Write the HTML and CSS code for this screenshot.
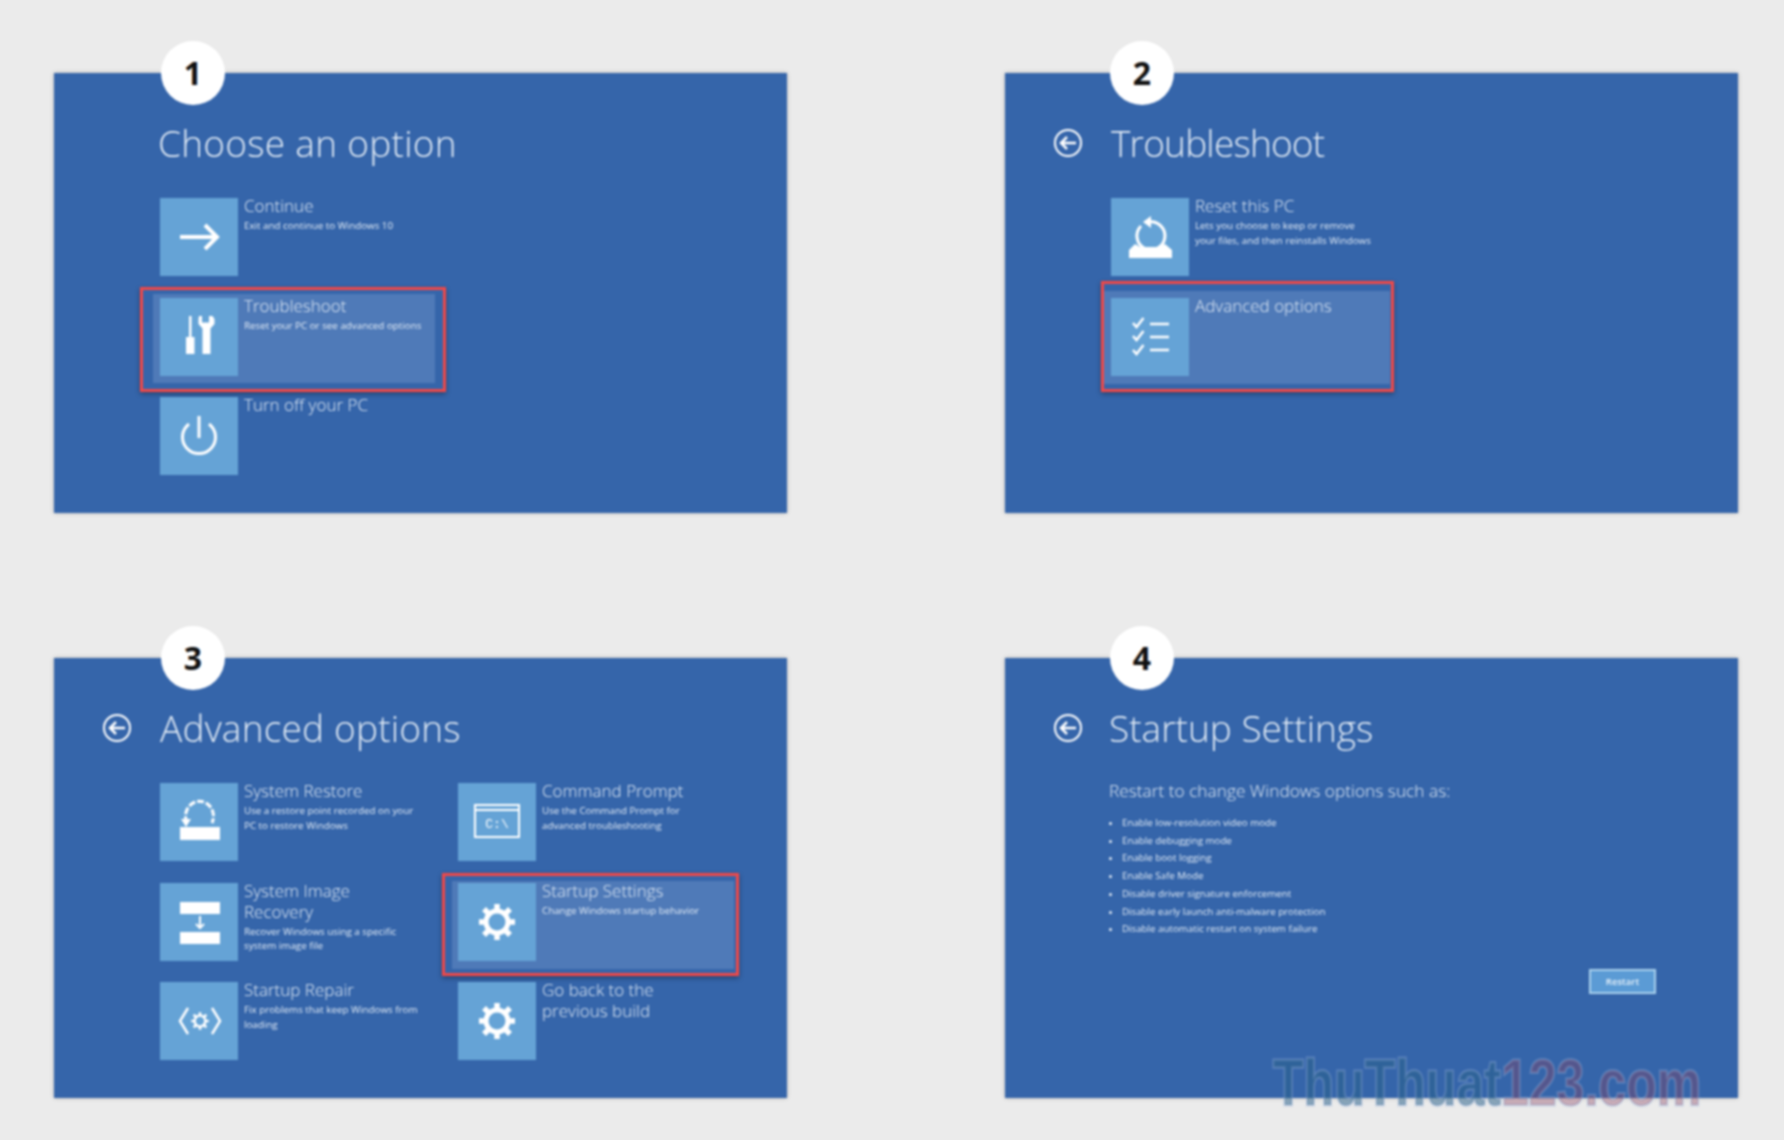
FILE: index.html
```html
<!DOCTYPE html>
<html lang="en">
<head>
  <meta charset="UTF-8" />
  <title>Startup Settings steps</title>
  <link rel="stylesheet" href="styles.css">
</head>
<body>
  <svg class="defs" width="0" height="0">
    <symbol id="gear" viewBox="0 0 78 78">
      <g class="line">
        <circle cx="39" cy="39" r="11" stroke-width="5" />
        <path d="M39 21v6M39 51v6M21 39h6M51 39h6M26 26l4.500 4.500M47.500 47.500l4.500 4.500M26 52l4.500-4.500M47.500 30.500l4.500-4.500" stroke-width="5.500" />
      </g>
    </symbol>
  </svg>

  <div class="sheet">
    <section class="panel">
      <div class="badge">1</div>
      <header class="head">
        <span class="back back-empty"></span>
        <h2 class="title-choose">Choose an option</h2>
      </header>
      <div class="options">
        <div class="option">
          <div class="tile">
            <svg viewBox="0 0 78 78"><path class="line" stroke-width="4" d="M20 39h36M45 27l12 12-12 12" /></svg>
          </div>
          <div class="text">
            <div class="name">Continue</div>
            <div class="desc">Exit and continue to Windows 10</div>
          </div>
        </div>
        <div class="option">
          <div class="glow glow-a"></div>
          <div class="tile">
            <svg viewBox="0 0 78 78">
              <path class="fill" d="M29 18h2.500v21H29zM26 39h8.500v17H26zM39 18l3 0v6.500h7V18h3.500l2 3v5l-4 4.500V56h-8V30.500l-4-4.500v-5z" />
            </svg>
          </div>
          <div class="text">
            <div class="name">Troubleshoot</div>
            <div class="desc">Reset your PC or see advanced options</div>
          </div>
          <div class="mark mark-a"></div>
        </div>
        <div class="option">
          <div class="tile">
            <svg viewBox="0 0 78 78"><path class="line" stroke-width="3" d="M39 19v22M29 27a16.500 16.500 0 1 0 20 0" /></svg>
          </div>
          <div class="text">
            <div class="name">Turn off your PC</div>
          </div>
        </div>
      </div>
    </section>

    <section class="panel">
      <div class="badge badge-right">2</div>
      <header class="head">
        <span class="back"><svg viewBox="0 0 30 30"><circle class="line" stroke-width="2" cx="15" cy="15" r="13" /><path class="line" stroke-width="2.500" d="M23 15H8M14 9l-6 6 6 6" /></svg></span>
        <h2 class="title-trouble">Troubleshoot</h2>
      </header>
      <div class="options">
        <div class="option">
          <div class="tile">
            <svg viewBox="0 0 78 78">
              <path class="line" stroke-width="3" d="M30 28a14 14 0 1 0 8-4" />
              <path class="fill" d="M40 18v12l-8-6zM24 46l5 3h20l5-3 7 6v8H18v-8z" />
            </svg>
          </div>
          <div class="text">
            <div class="name">Reset this PC</div>
            <div class="desc">Lets you choose to keep or remove<br>your files, and then reinstalls Windows</div>
          </div>
        </div>
        <div class="option">
          <div class="glow glow-b"></div>
          <div class="tile">
            <svg viewBox="0 0 78 78">
              <path class="line" stroke-width="2.500" d="M22 25l3.500 4 7-9M22 38l3.500 4 7-9M22 52l3.500 4 7-9M39 26h19M39 39h19M39 52h19" />
            </svg>
          </div>
          <div class="text">
            <div class="name">Advanced options</div>
          </div>
          <div class="mark mark-b"></div>
        </div>
      </div>
    </section>

    <section class="panel">
      <div class="badge">3</div>
      <header class="head">
        <span class="back"><svg viewBox="0 0 30 30"><circle class="line" stroke-width="2" cx="15" cy="15" r="13" /><path class="line" stroke-width="2.500" d="M23 15H8M14 9l-6 6 6 6" /></svg></span>
        <h2 class="title-advanced">Advanced options</h2>
      </header>
      <div class="options options-two">
        <div class="option">
          <div class="tile">
            <svg viewBox="0 0 78 78">
              <path class="line" stroke-width="3" stroke-dasharray="7 2" d="M27 40a14 15 0 1 1 25 0" />
              <path class="fill" d="M21 36h10l-5 8zM20 44h40v13H20z" />
            </svg>
          </div>
          <div class="text">
            <div class="name">System Restore</div>
            <div class="desc">Use a restore point recorded on your<br>PC to restore Windows</div>
          </div>
        </div>
        <div class="option">
          <div class="tile">
            <svg viewBox="0 0 78 78">
              <rect class="line" stroke-width="2" x="17" y="22" width="44" height="32" />
              <path class="line" stroke-width="2" d="M17 27h44" />
              <text class="prompt" x="39" y="45">C:\</text>
            </svg>
          </div>
          <div class="text">
            <div class="name">Command Prompt</div>
            <div class="desc">Use the Command Prompt for<br>advanced troubleshooting</div>
          </div>
        </div>
        <div class="option">
          <div class="tile">
            <svg viewBox="0 0 78 78">
              <path class="fill" d="M20 19h40v12H20zM20 49h40v12H20z" />
              <path class="line" stroke-width="2" d="M40 33v11M36 41l4 4 4-4" />
            </svg>
          </div>
          <div class="text">
            <div class="name">System Image<br>Recovery</div>
            <div class="desc">Recover Windows using a specific<br>system image file</div>
          </div>
        </div>
        <div class="option">
          <div class="glow glow-c"></div>
          <div class="tile">
            <svg viewBox="0 0 78 78"><use href="#gear" /></svg>
          </div>
          <div class="text">
            <div class="name">Startup Settings</div>
            <div class="desc">Change Windows startup behavior</div>
          </div>
          <div class="mark mark-c"></div>
        </div>
        <div class="option">
          <div class="tile">
            <svg viewBox="0 0 78 78">
              <path class="line" stroke-width="2.500" d="M28 26l-8 13 8 13M52 26l8 13-8 13" />
              <use href="#gear" x="20" y="20" width="40" height="38" />
            </svg>
          </div>
          <div class="text">
            <div class="name">Startup Repair</div>
            <div class="desc">Fix problems that keep Windows from<br>loading</div>
          </div>
        </div>
        <div class="option">
          <div class="tile">
            <svg viewBox="0 0 78 78"><use href="#gear" /></svg>
          </div>
          <div class="text">
            <div class="name">Go back to the<br>previous build</div>
          </div>
        </div>
      </div>
    </section>

    <section class="panel">
      <div class="badge badge-right">4</div>
      <header class="head head-startup">
        <span class="back"><svg viewBox="0 0 30 30"><circle class="line" stroke-width="2" cx="15" cy="15" r="13" /><path class="line" stroke-width="2.500" d="M23 15H8M14 9l-6 6 6 6" /></svg></span>
        <h2>Startup Settings</h2>
      </header>
      <div class="startup">
        <div class="lead">Restart to change Windows options such as:</div>
        <ul class="modes">
          <li>Enable low-resolution video mode</li>
          <li>Enable debugging mode</li>
          <li>Enable boot logging</li>
          <li>Enable Safe Mode</li>
          <li>Disable driver signature enforcement</li>
          <li>Disable early launch anti-malware protection</li>
          <li>Disable automatic restart on system failure</li>
        </ul>
        <div class="restart-row">
          <button class="restart">Restart</button>
        </div>
      </div>
      <div class="watermark">ThuThuat<span>123.com</span></div>
    </section>
  </div>
</body>
</html>
```

FILE: styles.css
```css
* {
  box-sizing: border-box;
}

body {
  margin: 0;
  height: 1140px;
  overflow: hidden;
  background: #ebebeb;
  font-family: "Open Sans", sans-serif;
}

.defs {
  position: absolute;
}

.sheet {
  display: grid;
  grid-template-columns: 733px 733px;
  grid-template-rows: 440px 440px;
  column-gap: 218px;
  row-gap: 145px;
  padding: 73px 0 0 54px;
  filter: blur(1px);
}

.panel {
  position: relative;
  padding: 45px 0 0 48px;
  background: #3565aa;
  box-shadow: 0 0 4px rgba(0, 0, 0, 0.25);
  color: #e3ecf6;
}

.badge {
  position: absolute;
  top: -32px;
  left: 107px;
  width: 64px;
  height: 64px;
  border-radius: 50%;
  background: #fff;
  color: #111;
  font-size: 32px;
  font-weight: 700;
  line-height: 64px;
  text-align: center;
}

.badge-right {
  left: 105px;
}

.head {
  display: flex;
  align-items: center;
  gap: 28px;
  height: 50px;
  margin-bottom: 30px;
}

.head-startup {
  gap: 26px;
}

.head h2 {
  margin: 0;
  font-size: 37px;
  font-weight: 300;
  line-height: 50px;
  white-space: nowrap;
}

.head .title-choose {
  margin-left: -2px;
  letter-spacing: 0.280px;
}

.head .title-trouble {
  letter-spacing: -0.800px;
}

.head .title-advanced {
  letter-spacing: 0.200px;
}

.back {
  flex: none;
  width: 30px;
  height: 30px;
}

.back svg {
  display: block;
}

.options {
  display: grid;
  grid-template-columns: 298px;
  grid-auto-rows: 78px;
  row-gap: 21.500px;
  margin-left: 58px;
}

.options-two {
  grid-template-columns: 298px 298px;
}

.option {
  position: relative;
  display: flex;
}

.tile {
  position: relative;
  flex: none;
  width: 78px;
  height: 78px;
  background: #65a3d6;
}

.tile svg {
  display: block;
  width: 78px;
  height: 78px;
}

.line {
  fill: none;
  stroke: #fff;
}

.fill {
  fill: #fff;
}

.prompt {
  fill: #fff;
  font-family: "Liberation Mono", monospace;
  font-size: 13px;
  text-anchor: middle;
}

.text {
  position: relative;
  margin-left: 6px;
  margin-top: -3px;
  white-space: nowrap;
}

.name {
  font-size: 17px;
  font-weight: 300;
  line-height: 21px;
}

.desc {
  margin-top: 3px;
  font-size: 9.800px;
  line-height: 14.500px;
}

.glow {
  position: absolute;
  background: #4f7ab8;
}

.glow-a {
  top: -4px;
  left: -7px;
  width: 282px;
  height: 89px;
}

.glow-b {
  top: -7px;
  left: -7px;
  width: 286px;
  height: 93px;
}

.glow-c {
  top: -2px;
  left: -6px;
  width: 282px;
  height: 88px;
}

.mark {
  position: absolute;
  border: 3px solid #f04848;
  box-shadow: 0 2px 5px rgba(0, 0, 0, 0.35);
}

.mark-a {
  top: -11px;
  left: -20px;
  width: 306px;
  height: 105px;
}

.mark-b {
  top: -17px;
  left: -10px;
  width: 293px;
  height: 111px;
}

.mark-c {
  top: -10px;
  left: -16px;
  width: 297px;
  height: 103px;
}

.startup {
  margin-left: 56px;
  margin-top: -3px;
}

.lead {
  font-size: 17.300px;
  font-weight: 300;
  line-height: 21px;
}

.modes {
  margin: 13px 0 0;
  padding: 0 0 0 13px;
  font-size: 9.750px;
  line-height: 17.700px;
}

.restart-row {
  display: flex;
  justify-content: flex-end;
  width: 547px;
  margin-top: 31px;
}

.restart {
  width: 67px;
  height: 25px;
  padding: 0;
  border: 2px solid #a9d0ec;
  background: #5b9bd5;
  color: #e8f2fa;
  font-family: "Open Sans", sans-serif;
  font-size: 9.500px;
  font-weight: 600;
}

.watermark {
  position: absolute;
  top: 388px;
  left: 268px;
  color: rgba(40, 95, 135, 0.5);
  font-family: "Liberation Sans", sans-serif;
  font-size: 65px;
  font-weight: 700;
  line-height: 74px;
  white-space: nowrap;
  -webkit-text-stroke: 3px rgba(150, 175, 215, 0.4);
  paint-order: stroke fill;
  transform: scaleX(0.77);
  transform-origin: left top;
}

.watermark span {
  color: rgba(140, 60, 90, 0.35);
}
```
